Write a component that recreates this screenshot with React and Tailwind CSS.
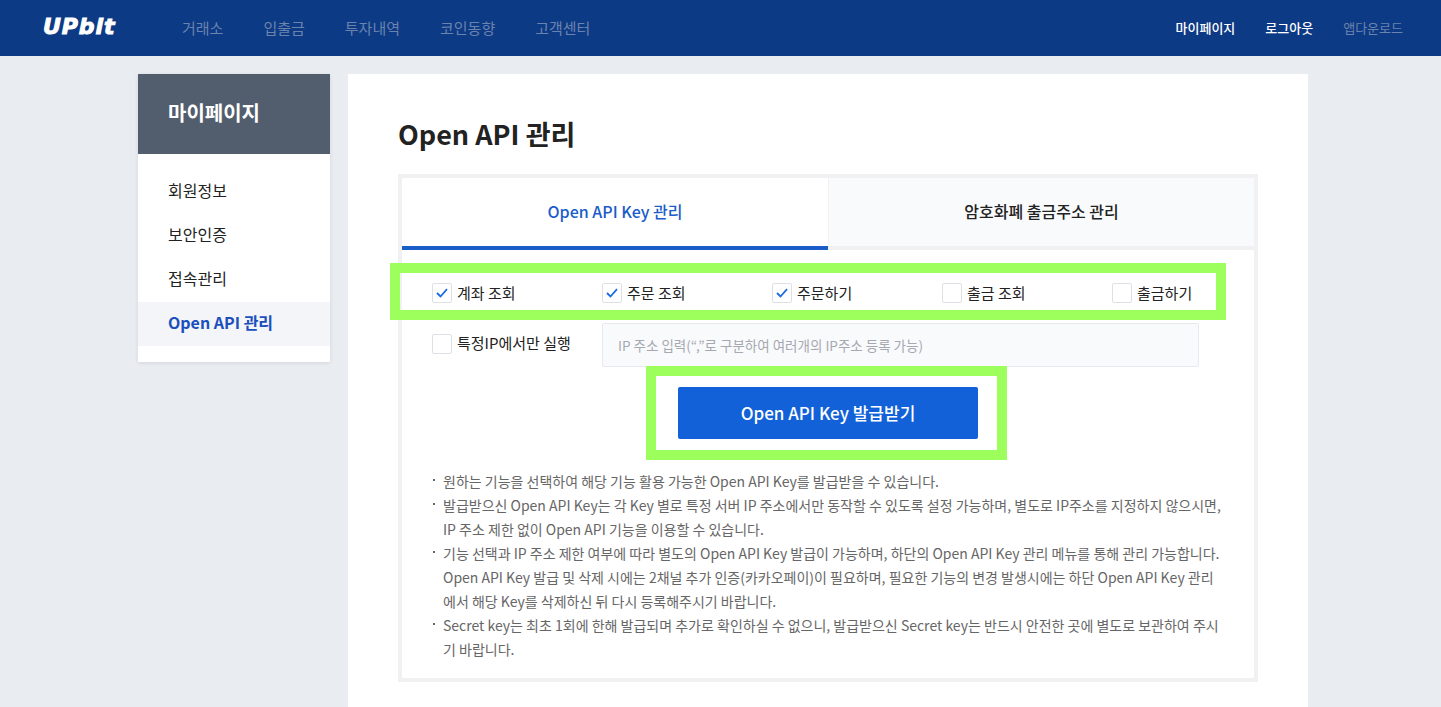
const navItems = ["거래소", "입출금", "투자내역", "코인동향", "고객센터"];
const sideItems = ["회원정보", "보안인증", "접속관리"];

const permissions = [
  { label: "계좌 조회", checked: true },
  { label: "주문 조회", checked: true },
  { label: "주문하기", checked: true },
  { label: "출금 조회", checked: false },
  { label: "출금하기", checked: false },
];

const notes = [
  ["원하는 기능을 선택하여 해당 기능 활용 가능한 Open API Key를 발급받을 수 있습니다."],
  [
    "발급받으신 Open API Key는 각 Key 별로 특정 서버 IP 주소에서만 동작할 수 있도록 설정 가능하며, 별도로 IP주소를 지정하지 않으시면,",
    "IP 주소 제한 없이 Open API 기능을 이용할 수 있습니다.",
  ],
  [
    "기능 선택과 IP 주소 제한 여부에 따라 별도의 Open API Key 발급이 가능하며, 하단의 Open API Key 관리 메뉴를 통해 관리 가능합니다.",
    "Open API Key 발급 및 삭제 시에는 2채널 추가 인증(카카오페이)이 필요하며, 필요한 기능의 변경 발생시에는 하단 Open API Key 관리",
    "에서 해당 Key를 삭제하신 뒤 다시 등록해주시기 바랍니다.",
  ],
  [
    "Secret key는 최초 1회에 한해 발급되며 추가로 확인하실 수 없으니, 발급받으신 Secret key는 반드시 안전한 곳에 별도로 보관하여 주시",
    "기 바랍니다.",
  ],
];

function Checkbox({ checked }) {
  return (
    <span className="flex h-[20px] w-[20px] shrink-0 items-center justify-center rounded-[2px] border border-[#dfe0e5] bg-white">
      {checked && (
        <svg width="12" height="10" viewBox="0 0 12 10" fill="none">
          <path d="M1 5l3.5 3.5L11 1.2" stroke="#1a6be0" strokeWidth="1.8" />
        </svg>
      )}
    </span>
  );
}

export default function App() {
  return (
    <div className="relative h-[707px] overflow-hidden bg-[#e9ecf1] font-['Noto_Sans_CJK_KR','Noto_Sans',sans-serif] text-[#222]">
      <header className="flex h-[56px] items-center bg-[#0d3a85] pl-[43px] pr-[38px]">
        <span className="w-[139px] pb-[2px] font-['DejaVu_Sans',sans-serif] text-[22px] leading-none font-bold tracking-[0.9px] text-white italic [-webkit-text-stroke:1px_white]">
          UPbit
        </span>
        <nav className="flex gap-[40px] text-[15px] text-[#6b83ad]">
          {navItems.map((item) => (
            <span key={item}>{item}</span>
          ))}
        </nav>
        <div className="ml-auto flex gap-[30px] text-[13px]">
          <span className="font-medium text-white">마이페이지</span>
          <span className="font-medium text-white">로그아웃</span>
          <span className="text-[#6b83ad]">앱다운로드</span>
        </div>
      </header>

      <div className="flex items-start gap-[18px] pt-[18px] pl-[138px]">
        <aside className="w-[192px] bg-white shadow-[0_1px_4px_rgba(0,0,0,0.1)]">
          <h2 className="flex h-[80px] items-center bg-[#525d6d] pb-[2px] pl-[30px] text-[20px] font-bold text-white">
            마이페이지
          </h2>
          <ul className="pt-[14px] pb-[16px] text-[16px]">
            {sideItems.map((item) => (
              <li key={item} className="flex h-[44px] items-center pl-[30px]">
                {item}
              </li>
            ))}
            <li className="mt-[2px] flex h-[44px] items-center bg-[#f4f5f8] pb-[4px] pl-[30px] font-bold text-[#1a4fbd]">
              Open API 관리
            </li>
          </ul>
        </aside>

        <main className="h-[640px] w-[960px] bg-white px-[50px] pt-[40px]">
          <h1 className="h-[60px] text-[27px] leading-[40px] font-bold">Open API 관리</h1>

          <section className="h-[508px] border-4 border-[#f1f1f4]">
            <div className="flex h-[72px]">
              <div className="flex w-[426px] items-center justify-center border-b-4 border-[#1a5cc8] pb-[2px] text-[16px] font-medium text-[#1a5cc8]">
                Open API Key 관리
              </div>
              <div className="flex flex-1 items-center justify-center border-b-4 border-l border-[#f1f1f4] bg-[#f9fafc] pb-[2px] text-[16px] font-medium">
                암호화폐 출금주소 관리
              </div>
            </div>

            <div className="px-[30px]">
              <div className="grid grid-cols-[repeat(5,170px)] pt-[33px]">
                {permissions.map((p) => (
                  <label key={p.label} className="flex h-[20px] items-center gap-[5px] text-[15px]">
                    <Checkbox checked={p.checked} />
                    {p.label}
                  </label>
                ))}
              </div>

              <div className="mt-[20px] flex h-[44px] items-center">
                <label className="flex w-[170px] items-center gap-[5px] pb-[3px] text-[15px]">
                  <Checkbox />
                  특정IP에서만 실행
                </label>
                <div className="flex h-[44px] w-[597px] items-center rounded-[2px] border border-[#e8e9ee] bg-[#f9fafc] pl-[15px] text-[13.5px] text-[#a5a8b0]">
                  IP 주소 입력(“,”로 구분하여 여러개의 IP주소 등록 가능)
                </div>
              </div>

              <div className="mt-[20px] flex justify-center">
                <button className="h-[52px] w-[300px] rounded-[2px] bg-[#1261d8] text-[17px] font-medium text-white">
                  Open API Key 발급받기
                </button>
              </div>

              <ul className="mt-[30px] text-[14px] leading-[24px] text-[#666]">
                {notes.map((lines) => (
                  <li key={lines[0]} className="relative pl-[11px] whitespace-nowrap">
                    <span className="absolute top-[10px] left-[1px] h-[2px] w-[2px] bg-[#666]" />
                    {lines.map((line) => (
                      <div key={line}>{line}</div>
                    ))}
                  </li>
                ))}
              </ul>
            </div>
          </section>
        </main>
      </div>

      <div className="pointer-events-none absolute top-[263px] left-[390px] h-[57px] w-[836px] border-10 border-[#9dff5c]" />
      <div className="pointer-events-none absolute top-[366px] left-[646px] h-[94px] w-[361px] border-10 border-[#9dff5c]" />
    </div>
  );
}
